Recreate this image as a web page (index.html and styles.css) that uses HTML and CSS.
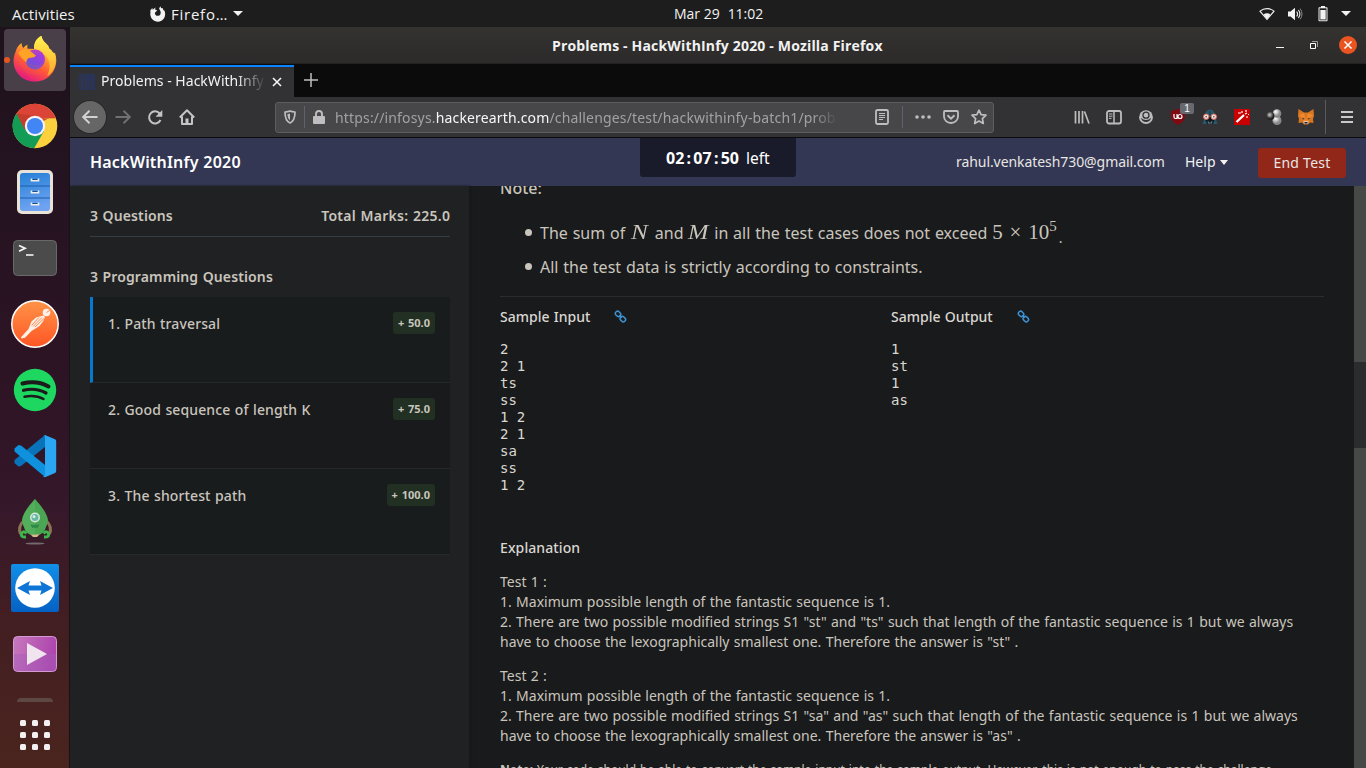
FILE: index.html
```html
<!DOCTYPE html>
<html lang="en">
<head>
<meta charset="utf-8">
<title>Problems - HackWithInfy 2020 - Mozilla Firefox</title>
<link rel="stylesheet" href="styles.css">
</head>
<body>
<header class="topbar">
  <div class="top-left">
    <span class="activities">Activities</span>
    <svg class="ff-mono" width="16" height="16" viewBox="0 0 16 16"><path d="M2.200 1.800l.5 2L5.500 1.600 5 3.600l2.300.9-1.500 1.200C4.600 6.300 4.600 8.200 5.800 9.200c1.800 1.400 4.800.3 4.900-2.300.1-1.900-1-2.900-1.600-4.100L10.200.2l1.100 2 1.300-.2.700 2 1.200.7c2 4.800-.8 11-6.500 11C2.500 15.700-.5 10.600.5 6.200L.3 4.100l1-.5z" fill="#f2f2f2"/></svg>
    <span class="app-name">Firefo…</span>
    <i class="caret"></i>
  </div>
  <div class="clock"><span>Mar 29</span><span>11:02</span></div>
  <div class="top-right">
    <svg width="16" height="14" viewBox="0 0 16 14"><path d="M1 4.200C5 .8 11 .8 15 4.200L8 12.500z" fill="none" stroke="#f2f2f2" stroke-width="1.100"/><path d="M4.500 7.400C6.500 5.800 9.500 5.800 11.500 7.400L8 12.400z" fill="#f2f2f2"/></svg>
    <svg class="volume" width="16" height="14" viewBox="0 0 16 14"><path d="M1 4.500h2.500L8 .8v12.400L3.500 9.500H1z" fill="#f2f2f2"/><path d="M9.700 4.500q1.800 2.500 0 5M11.400 3q3 4 0 8" fill="none" stroke="#eee" stroke-width="1.100"/><path d="M13.200 1.700q3.600 5.300 0 10.600" fill="none" stroke="#888" stroke-width="1"/></svg>
    <svg width="10" height="16" viewBox="0 0 10 16"><path d="M3 0h4v1.300h1.800q.7 0 .7.700v12.500q0 .7-.7.700H1.200q-.7 0-.7-.7V2q0-.7.700-.7H3z" fill="#f2f2f2"/><path d="M1.500 2.300h7v12h-7z" fill="#1d1d1d"/><path d="M2.300 4h5.400v9.500H2.300z" fill="#f2f2f2"/></svg>
    <i class="caret"></i>
  </div>
</header>
<div class="desktop">
  <nav class="dock">
    <div class="dock-item"><div class="active-app">
      <svg width="48" height="48" viewBox="0 0 48 48"><defs><linearGradient id="fa" x1=".8" y1="0" x2=".3" y2="1"><stop offset="0" stop-color="#fff44f"/><stop offset=".35" stop-color="#ffb52b"/><stop offset=".65" stop-color="#ff5a36"/><stop offset="1" stop-color="#e31587"/></linearGradient><linearGradient id="fb" x1=".8" y1="0" x2=".2" y2="1"><stop offset="0" stop-color="#b833e1"/><stop offset="1" stop-color="#5b57d6"/></linearGradient><linearGradient id="fc" x1="0" y1="0" x2="0" y2="1"><stop offset="0" stop-color="#fff44f"/><stop offset="1" stop-color="#ffa52d"/></linearGradient></defs><path d="M4.500 16Q6 10 10.500 7q.2 3.500 1.800 5Q14 9.600 16.500 8.500q-.5 2.500.2 4.200L23 13c0-6.500 2.500-11 7.500-13q.5 4 4.500 7.500 3 2.500 3.200 5 2.500 1 3.500 4 1.500 0 2.500 1c4 12-3.500 28-20 28C7 45.500-1.500 29.500 4.500 16z" fill="url(#fa)"/><path d="M23 13C23 6 26 2 30.500 0q.5 4 4.500 7.500 3 2.500 3.200 5 4.500 4 6 7.500c2 11-4 18-8 20Q45 20 23 13z" fill="url(#fc)"/><circle cx="24" cy="23.500" r="10" fill="url(#fb)"/><path d="M16.500 13Q23 11 29 14.500l3 3.500-5-.5q-3 1-4 2-3 4-7.500 3.500 2 5 7 6Q33 31 34 21q8 14-8 18Q8 40 8 19z" fill="#ff6334" opacity=".15"/><path d="M7 17q5-6 13-1.500l5 4.200q-2 2.700-7 2-3 2-2.500 5Q10 22 7 17z" fill="#ffa326"/></svg>
    </div></div>
    <div class="dock-item">
      <svg width="48" height="48" viewBox="0 0 48 48"><circle cx="24" cy="24" r="22.300" fill="#fdd03e"/><path d="M24 24L5.500 11.500A22.300 22.300 0 0 1 43.300 13z" fill="#db4437"/><path d="M5.300 11.800A22.300 22.300 0 0 0 23.200 46.300L33 29 24 24z" fill="#129c56"/><path d="M5.500 11.500L14 28 24 14z" fill="#c63c2d"/><path d="M24 13h19.300l1.500 3.200H24z" fill="#db4437"/><path d="M33 17h12q-4-1.500-13-1z" fill="#c9a02b" opacity=".5"/><circle cx="24" cy="24" r="10.200" fill="#f4f4f4"/><circle cx="24" cy="24" r="8" fill="#4285f4"/></svg>
    </div>
    <div class="dock-item">
      <svg width="48" height="48" viewBox="0 0 48 48"><defs><linearGradient id="fi" x1="0" y1="0" x2=".2" y2="1"><stop offset="0" stop-color="#2480d6"/><stop offset="1" stop-color="#6fa3f2"/></linearGradient></defs><rect x="6" y="2" width="36" height="44" rx="5" fill="#e8e2d8"/><rect x="9" y="5" width="30" height="38" rx="3" fill="url(#fi)"/><path d="M9 18h30M9 30h30" stroke="#1c5fab"/><g fill="#174f91"><rect x="20" y="11" width="8" height="1.500"/><rect x="20" y="23" width="8" height="1.500"/><rect x="20" y="35" width="8" height="1.500"/></g><path d="M20.500 10.500v2.300h7v-2.300M20.500 22.500v2.300h7v-2.300M20.500 34.500v2.300h7v-2.300" fill="none" stroke="#f1eee9" stroke-width="1.600"/></svg>
    </div>
    <div class="dock-item">
      <svg width="48" height="48" viewBox="0 0 48 48"><rect x="2.500" y="6.500" width="43" height="35" rx="4" fill="#4b4b4b" stroke="#696969"/><path d="M8 11.500l6 2.800-6 3" fill="none" stroke="#f4f4f4" stroke-width="1.800"/><path d="M15 21h7.500" stroke="#f4f4f4" stroke-width="1.600"/></svg>
    </div>
    <div class="dock-item">
      <svg width="48" height="48" viewBox="0 0 48 48"><defs><linearGradient id="po" x1="0" y1="0" x2="0" y2="1"><stop offset="0" stop-color="#ff9448"/><stop offset="1" stop-color="#ff5524"/></linearGradient></defs><circle cx="24" cy="24" r="23.200" fill="url(#po)" stroke="#fff" stroke-width="1.500"/><circle cx="35.500" cy="12.500" r="3.800" fill="#fff1e8"/><path d="M32.500 15.500L25 17.500l-4.500 4L17.500 29 10 37.300l.5 1.200 3.500-.8 6.500-6.700 8-5 3.500-4.500 2-4.500z" fill="#fff1e8"/><path d="M31 17.500l-9 9M28 17.500l-7.500 8M33 18.500l-9 8.500M35.500 12.500l3-2" fill="none" stroke="#ff7c39" stroke-width=".9"/></svg>
    </div>
    <div class="dock-item">
      <svg width="48" height="48" viewBox="0 0 48 48"><circle cx="24" cy="24" r="21.200" fill="#1ed760"/><path d="M11.500 17.500q14.500-3.500 26 3" stroke="#1b1b1b" stroke-width="4" fill="none" stroke-linecap="round"/><path d="M12.500 24.300q12.500-3 22.500 2.700" stroke="#1b1b1b" stroke-width="3.200" fill="none" stroke-linecap="round"/><path d="M13.500 30.700q11-2.300 19 2.300" stroke="#1b1b1b" stroke-width="2.500" fill="none" stroke-linecap="round"/></svg>
    </div>
    <div class="dock-item">
      <svg width="48" height="48" viewBox="0 0 48 48"><path d="M34 3v12L10 34l-2.500.5-4-3.500v-3z" fill="#0873b9"/><path d="M34 45V33L10 13.500 7.500 13l-4 3.500v3z" fill="#1091de"/><path d="M34 3l10 4.300q1.200.6 1.200 2V39q0 1.500-1.200 2L34 45.200q-1 0-2-1 2 .5 2-1.500V5.500Q34 3 32.500 4z" fill="#2aa6f2"/></svg>
    </div>
    <div class="dock-item">
      <svg width="48" height="48" viewBox="0 0 48 48"><path d="M12.500 23q-6 6-3 13M35.500 23q6 6 3 13" fill="none" stroke="#8b7355" stroke-width="3"/><path d="M19 36h10l-3 3h-4z" fill="#d7b98a"/><path d="M24 1Q36 14 37 22q-2 12-8 14.500H19Q13 34 11 22 12 14 24 1z" fill="#4ba654"/><path d="M24 1Q12 14 11 22q2 12 8 14.500h5z" fill="#5ab55f" opacity=".5"/><circle cx="24" cy="19.500" r="5" fill="#d3e6dd"/><circle cx="24" cy="19.500" r="3.500" fill="#69b9a1"/><circle cx="23" cy="18.700" r="1.400" fill="#d9f3ec"/><path d="M20 27.500h8M21 29h6" stroke="#247c40" stroke-width="1.500" stroke-dasharray="1.500 .6"/><path d="M15.500 35.500q-3-3.500-5 0-1 4 4.500 3.500M32.500 35.500q3-3.500 5 0 1 4-4.500 3.500" fill="none" stroke="#3eb44d" stroke-width="3"/><ellipse cx="24" cy="45.500" rx="9.500" ry="1.100" fill="#756a70"/></svg>
    </div>
    <div class="dock-item">
      <svg width="48" height="48" viewBox="0 0 48 48"><defs><linearGradient id="tv" x1="0" y1="0" x2="0" y2="1"><stop offset="0" stop-color="#118fe8"/><stop offset="1" stop-color="#0561c4"/></linearGradient></defs><rect width="48" height="48" rx="2" fill="url(#tv)"/><circle cx="24" cy="24" r="19.800" fill="#fff"/><path d="M6 24l13-7-1.500 4.500h13L29 17l13 7-13 7 1.500-4.500h-13L19 31z" fill="#0c75d5"/></svg>
    </div>
    <div class="dock-item">
      <svg width="48" height="48" viewBox="0 0 48 48"><defs><linearGradient id="vi" x1="0" y1="0" x2="1" y2=".2"><stop offset="0" stop-color="#c879bd"/><stop offset="1" stop-color="#ad45ad"/></linearGradient></defs><rect x="2.500" y="6.500" width="43" height="35" rx="4" fill="url(#vi)" stroke="#d29bd0"/><path d="M3 24h42v14q0 3-3 3H6q-3 0-3-3z" fill="#a35cba" opacity=".4"/><path d="M16 13l20 11-20 11z" fill="#f0e4ef"/></svg>
    </div>
    <div class="dock-peek"></div>
    <svg class="app-grid" width="30" height="30" viewBox="0 0 30 30" fill="#f2f0f0"><rect width="6" height="6" rx="1.500"/><rect x="12" width="6" height="6" rx="1.500"/><rect x="24" width="6" height="6" rx="1.500"/><rect y="12" width="6" height="6" rx="1.500"/><rect x="12" y="12" width="6" height="6" rx="1.500"/><rect x="24" y="12" width="6" height="6" rx="1.500"/><rect y="24" width="6" height="6" rx="1.500"/><rect x="12" y="24" width="6" height="6" rx="1.500"/><rect x="24" y="24" width="6" height="6" rx="1.500"/></svg>
  </nav>
  <div class="window">
    <div class="titlebar">
      <span class="window-title">Problems - HackWithInfy 2020 - Mozilla Firefox</span>
      <svg class="window-controls" width="80" height="20" viewBox="0 0 80 20"><path d="M7 12.500h8" stroke="#f2f2f2"/><path d="M41.500 8.500h5v5h-5z" fill="none" stroke="#fff"/><path d="M43 6.500h5.500V12" fill="none" stroke="#999"/><circle cx="79" cy="10" r="9" fill="#e95420"/><path d="M75.500 6.500l7 7M82.500 6.500l-7 7" stroke="#fff" stroke-width="1.500"/></svg>
    </div>
    <div class="tabs">
      <div class="tab">
        <svg width="16" height="16" viewBox="0 0 16 16"><rect width="16" height="16" rx="1" fill="#2a3358"/><path d="M2.500 1v14M6.500 2v13M6.500 8q4.500-1.500 4.500 2v5" fill="none" stroke="#343643" stroke-width="1.500"/></svg>
        <span class="tab-title">Problems - HackWithInfy</span>
        <svg class="tab-close" width="10" height="10" viewBox="0 0 10 10"><path d="M1 1l8 8M9 1L1 9" stroke="#f4f4f4" stroke-width="1.600"/></svg>
      </div>
      <svg class="new-tab" width="14" height="14" viewBox="0 0 14 14"><path d="M7 0v14M0 7h14" stroke="#c0c0c0" stroke-width="1.500"/></svg>
    </div>
    <div class="toolbar">
      <div class="back"><svg width="16" height="16" viewBox="0 0 16 16"><path d="M15.500 8H1.500M7.500 1.800L1.200 8l6.300 6.200" fill="none" stroke="#d2d2d2" stroke-width="2"/></svg></div>
      <div class="nav-icons">
        <svg width="16" height="16" viewBox="0 0 16 16"><path d="M.5 8h14M8.500 1.800L14.800 8l-6.300 6.200" fill="none" stroke="#707072" stroke-width="1.900"/></svg>
        <svg width="16" height="16" viewBox="0 0 16 16"><path d="M12.700 4.500A6 6 0 1 0 13.500 11" fill="none" stroke="#c4c4c4" stroke-width="2"/><path d="M15.300 1v6.800H8.500z" fill="#c4c4c4"/></svg>
        <svg width="16" height="16" viewBox="0 0 16 16"><path d="M.8 8.500L8 1.300l7.200 7.200M3 7.500V15h10V7.500" fill="none" stroke="#c4c4c4" stroke-width="2" stroke-linejoin="round"/><path d="M6.500 9.500h3V15h-3z" fill="#c4c4c4"/></svg>
      </div>
      <div class="urlbar">
        <svg class="shield" width="12" height="14" viewBox="0 0 12 14"><path d="M6 1C4.500 1.700 3 1.900 1 2c0 5 .5 9 5 11 4.500-2 5-6 5-11-2-.1-3.500-.3-5-1z" fill="none" stroke="#bebebf" stroke-width="1.700" stroke-linejoin="round"/><path d="M6 3.500v7Q3.500 8.500 3.300 4.200z" fill="#bebebf"/></svg>
        <i class="url-rule"></i>
        <svg class="lock" width="12" height="14" viewBox="0 0 12 14"><rect y="6" width="12" height="8" rx="1" fill="#bebebf"/><path d="M3 7V4q0-3 3-3t3 3v3" fill="none" stroke="#bebebf" stroke-width="1.900"/></svg>
        <span class="url">https://infosys.<b>hackerearth.com</b>/challenges/test/hackwithinfy-batch1/probl</span>
        <svg class="reader" width="14" height="16" viewBox="0 0 14 16"><rect x="1" y="1" width="12" height="14" rx="1.500" fill="none" stroke="#bebebf" stroke-width="1.800"/><path d="M4 4.500h6M4 6.500h6M4 8.500h6M4 10.500h4" stroke="#bebebf"/></svg>
        <i class="url-rule late"></i>
        <svg class="dots" width="16" height="4" viewBox="0 0 16 4" fill="#bebebf"><circle cx="2" cy="2" r="1.800"/><circle cx="8" cy="2" r="1.800"/><circle cx="14" cy="2" r="1.800"/></svg>
        <svg class="pocket" width="16" height="14" viewBox="0 0 16 14"><path d="M2 1h12q1 0 1 1v4.500a7 6.500 0 0 1-14 0V2q0-1 1-1z" fill="none" stroke="#bebebf" stroke-width="1.800"/><path d="M4.500 5.200L8 8.600l3.500-3.400" fill="none" stroke="#bebebf" stroke-width="1.900"/></svg>
        <svg width="16" height="16" viewBox="0 0 16 16"><path d="M8 1.200l2.100 4.400 4.900.6-3.600 3.400.9 4.900L8 12.100l-4.300 2.400.9-4.900L1 6.200l4.900-.6z" fill="none" stroke="#bebebf" stroke-width="1.700" stroke-linejoin="round"/></svg>
      </div>
      <div class="extensions">
        <svg width="16" height="16" viewBox="0 0 16 16"><path d="M1.500 2v12.500M5 2v12.500M8.500 2v12.500M10.500 2.500l4.500 12" stroke="#bdbdbe" stroke-width="1.700"/></svg>
        <svg width="16" height="16" viewBox="0 0 16 16"><rect x="1" y="2" width="14" height="12.500" rx="2" fill="none" stroke="#bdbdbe" stroke-width="1.800"/><path d="M8 2v12" stroke="#bdbdbe" stroke-width="1.500"/><path d="M3 5h3.500M3 7.200h3.500M3 9.400h2.500" stroke="#bdbdbe"/></svg>
        <svg width="16" height="16" viewBox="0 0 16 16"><circle cx="8" cy="8.200" r="6.900" fill="#bdbdbe"/><path d="M3 8.700q2 2.300 5 2.300t5-2.300q-1 4.300-5 4.300t-5-4.300z" fill="#323234"/><circle cx="8" cy="6.200" r="3" fill="#bdbdbe" stroke="#323234" stroke-width="1.300"/></svg>
        <span class="ublock"><svg width="16" height="16" viewBox="0 0 16 16"><path d="M8 0l7 2v5q0 6-7 9Q1 13 1 7V2z" fill="#810912"/><path d="M4 5v3q0 1.500 1.500 1.500H7V5M8 7.500a2 2 0 1 0 4 0 2 2 0 1 0-4 0" fill="none" stroke="#fff" stroke-width="1.200"/></svg><span class="badge">1</span></span>
        <svg width="16" height="16" viewBox="0 0 16 16"><path d="M8 .5Q3 1 3 7L.5 15h15L13 7Q13 1 8 .5z" fill="#285769"/><path d="M3 10l4-2h2l4 2-2 5H5z" fill="#111c22"/><path d="M8 2v4" stroke="#163947"/><g fill="#f4ddd8" stroke="#dc6b56"><circle cx="4.200" cy="7.700" r="2.700"/><circle cx="11.800" cy="7.700" r="2.700"/></g><circle cx="4.200" cy="7.700" r=".8" fill="#444"/><circle cx="11.800" cy="7.700" r=".8" fill="#444"/><path d="M5.500 13h1.500v2M10.500 13H9v2" stroke="#8ba3ab" fill="none" stroke-width=".8"/></svg>
        <svg width="16" height="16" viewBox="0 0 16 16"><path d="M0 0h16v16H0z" fill="#c80000"/><path d="M2.500 13L10 6" stroke="#fff" stroke-width="2.300"/><path d="M8 2v2M13 4l-2 1M12 8h2M4 4h3M12 1v2M14 5.500h1" stroke="#fff" stroke-width="1.200"/></svg>
        <svg width="16" height="16" viewBox="0 0 16 16"><defs><radialGradient id="ball" cx=".35" cy=".3"><stop stop-color="#fff"/><stop offset="1" stop-color="#888"/></radialGradient><radialGradient id="dball" cx=".4" cy=".35"><stop stop-color="#ccc"/><stop offset="1" stop-color="#222"/></radialGradient></defs><circle cx="11" cy="11.500" r="4.500" fill="url(#ball)"/><circle cx="11" cy="4.500" r="4.300" fill="url(#ball)"/><circle cx="4.500" cy="7" r="3.900" fill="url(#dball)"/></svg>
        <svg width="16" height="16" viewBox="0 0 16 16"><path d="M.5 0L6 3.500h4L15.500 0 16 7l-1 3 .5 4-3.500-.5L10 15.500H6L4 13.500.5 14 1 10 0 7z" fill="#d9761f"/><path d="M1 6l5-2 2 8 2-8 5 2-3 3-2 4H6L4 9z" fill="#ed8a30"/><path d="M4 8.500l3 1.500-2 .5zM12 8.500L9 10l2 .5z" fill="#3b2a25"/><path d="M5.500 12h5l-.5 3H6z" fill="#d8c4b7"/><path d="M6.500 13h3v1.500h-3z" fill="#282220"/></svg>
      </div>
      <i class="menu-rule"></i>
      <svg class="menu" width="12" height="12" viewBox="0 0 12 12"><path d="M0 1h12M0 6h12M0 11h12" stroke="#c9c9c9" stroke-width="1.900"/></svg>
    </div>
    <div class="site-header">
      <span class="brand">HackWithInfy 2020</span>
      <div class="timer"><b>02</b><b class="colon">:</b><b>07</b><b class="colon">:</b><b>50</b><span class="left">left</span></div>
      <span class="email">rahul.venkatesh730@gmail.com</span>
      <span class="help">Help</span><i class="caret help-caret"></i>
      <button class="end-test">End Test</button>
    </div>
    <div class="page">
      <aside class="sidebar">
        <div class="summary"><span class="q-count">3 Questions</span><span class="marks">Total Marks: 225.0</span></div>
        <h3 class="section-title">3 Programming Questions</h3>
        <div class="questions">
          <div class="question current"><span>1. Path traversal</span><b class="score">+ 50.0</b></div>
          <div class="question even"><span>2. Good sequence of length K</span><b class="score">+ 75.0</b></div>
          <div class="question"><span>3. The shortest path</span><b class="score">+ 100.0</b></div>
        </div>
      </aside>
      <main class="problem">
        <p class="note-title">Note:</p>
        <ul class="notes">
          <li><span>The sum of <i class="math var-n">N</i> and <i class="math var-m">M</i> in all the test cases does not exceed <span class="math">5 × 10<sup>5</sup></span><small class="dot">.</small></span></li>
          <li><span>All the test data is strictly according to constraints.</span></li>
        </ul>
        <div class="samples">
          <section>
            <h4><span>Sample Input</span><svg class="link" width="13" height="13" viewBox="0 0 13 13"><g fill="none" stroke="#3c92d2" stroke-width="1.500"><rect x="1.200" y="1.700" width="5.600" height="4.400" rx="2" transform="rotate(45 4 4)"/><rect x="6.200" y="7" width="5.600" height="4.400" rx="2" transform="rotate(45 9 9)"/><path d="M5.200 5.200l2.600 2.600"/></g></svg></h4>
            <pre>2
2 1
ts
ss
1 2
2 1
sa
ss
1 2</pre>
          </section>
          <section>
            <h4><span>Sample Output</span><svg class="link" width="13" height="13" viewBox="0 0 13 13"><g fill="none" stroke="#3c92d2" stroke-width="1.500"><rect x="1.200" y="1.700" width="5.600" height="4.400" rx="2" transform="rotate(45 4 4)"/><rect x="6.200" y="7" width="5.600" height="4.400" rx="2" transform="rotate(45 9 9)"/><path d="M5.200 5.200l2.600 2.600"/></g></svg></h4>
            <pre>1
st
1
as</pre>
          </section>
        </div>
        <h4 class="explain-title">Explanation</h4>
        <p class="explain">Test 1 :<br>1. Maximum possible length of the fantastic sequence is 1.<br>2. There are two possible modified strings S1 "st" and "ts" such that length of the fantastic sequence is 1 but we always<br>have to choose the lexographically smallest one. Therefore the answer is "st" .</p>
        <p class="explain">Test 2 :<br>1. Maximum possible length of the fantastic sequence is 1.<br>2. There are two possible modified strings S1 "sa" and "as" such that length of the fantastic sequence is 1 but we always<br>have to choose the lexographically smallest one. Therefore the answer is "as" .</p>
        <p class="footnote"><b>Note:</b> Your code should be able to convert the sample input into the sample output. However, this is not enough to pass the challenge,</p>
      </main>
      <div class="scrollbar"><div class="thumb"></div></div>
    </div>
  </div>
</div>
</body>
</html>
```
FILE: styles.css
```css
* { box-sizing: border-box; }
html, body { margin: 0; width: 1366px; height: 768px; overflow: hidden; background: #191a1c; }
body { display: flex; flex-direction: column; font-family: "Noto Sans", "Open Sans", sans-serif; font-size: 14px; color: #f2f2f2; white-space: nowrap; }
svg { display: block; flex: none; }
.caret { border: 5px solid transparent; border-top-color: #f2f2f2; border-bottom: 0; flex: none; }

.topbar { height: 27px; flex: none; background: #1d1d1d; display: grid; grid-template-columns: 662px auto 1fr; align-items: center; padding: 0 15px 0 12px; font-family: "Open Sans", sans-serif; }
.top-left { display: flex; align-items: center; font-size: 15px; }
.activities { width: 138px; letter-spacing: .1px; }
.app-name { margin: 0 5px 0 5px; width: 57px; letter-spacing: .75px; }
.clock { display: flex; gap: 8px; letter-spacing: -.02px; }
.top-right { display: flex; align-items: center; justify-content: flex-end; gap: 13px; }
.volume { margin: 0 2px 0 -1px; }

.desktop { display: flex; height: 741px; }
.dock { width: 70px; flex: none; display: flex; flex-direction: column; align-items: center; background: linear-gradient(#1e121b 0, #241321 20%, #2e1424 50%, #35182a 65%, #431e22 80%, #4a251e); border-right: 1px solid #19131a; }
.dock-item { height: 66px; flex: none; display: grid; place-items: center; }
.active-app { width: 62px; height: 62px; border-radius: 4px; background: #493f49; display: grid; place-items: center; position: relative; }
.active-app::before { content: ""; position: absolute; left: 0; top: 28px; width: 6px; height: 6px; border-radius: 50%; background: #e95420; }
.dock-peek { width: 36px; height: 4px; margin-top: 11px; border-radius: 6px 6px 0 0; background: #5d4742; }
.app-grid { margin-top: 18px; }

.window { flex: 1; min-width: 0; display: flex; flex-direction: column; }
.titlebar { height: 37px; background: linear-gradient(#343330, #2c2a2a); border-bottom: 1px solid #222; display: flex; align-items: center; }
.window-title { font-weight: 700; font-size: 14px; margin-left: 482px; width: 331px; letter-spacing: .17px; font-family: "Open Sans", sans-serif; }
.window-controls { margin-left: 386px; overflow: visible; }
.tabs { height: 33px; background: #0b0b0b; display: flex; align-items: center; }
.tab { width: 224px; height: 32px; border-top: 2px solid #0a84ff; background: #323234; display: flex; align-items: center; padding-left: 9px; align-self: flex-end; }
.tab-title { width: 165px; margin: -4px 0 0 6px; overflow: hidden; letter-spacing: .02px; -webkit-mask-image: linear-gradient(90deg, #000 82%, transparent); mask-image: linear-gradient(90deg, #000 82%, transparent); }
.tab-close { margin-left: 6px; }
.new-tab { margin: -2px 0 0 10px; }
.toolbar { height: 41px; background: #323234; border-bottom: 1px solid #0c0c0d; display: flex; align-items: center; padding-left: 4px; }
.back { width: 32px; height: 32px; border-radius: 50%; background: #666667; display: grid; place-items: center; box-shadow: 0 0 0 1px #28282a; }
.nav-icons { display: flex; gap: 16px; margin-left: 9px; }
.urlbar { width: 719px; height: 31px; margin-left: 80px; background: #474749; border: 1px solid #5d5d5f; border-radius: 3px; display: flex; align-items: center; padding-left: 8px; }
.url-rule { width: 1px; height: 22px; background: #5c6270; margin: 0 8px; }
.url-rule.late { margin: 0 11px 0 13px; }
.url { width: 503px; margin: 0 37px 0 10px; overflow: hidden; color: #a2a2a3; letter-spacing: .16px; -webkit-mask-image: linear-gradient(90deg, #000 95%, transparent); mask-image: linear-gradient(90deg, #000 95%, transparent); }
.url b { font-weight: 400; color: #f7f7f8; }
.dots { margin-left: 1px; }
.pocket { margin: 0 12px; }
.extensions { display: flex; gap: 16px; margin-left: 80px; }
.ublock { position: relative; }
.badge { position: absolute; left: 10px; top: -6px; width: 14px; height: 11px; border-radius: 2px; background: #666a70; font: 10px/11px "Liberation Sans", sans-serif; text-align: center; color: #fff; }
.menu-rule { width: 1px; height: 34px; background: #5b5b5d; margin: 0 15px 0 11px; }

.site-header { height: 48px; background: #333753; display: flex; align-items: center; padding-left: 20px; }
.brand { font-size: 16px; font-weight: 600; width: 550px; color: #fff; letter-spacing: .2px; word-spacing: .4px; }
.timer { width: 156px; height: 39px; align-self: flex-start; background: #1a1b2a; border-radius: 0 0 3px 3px; display: flex; align-items: center; padding: 1px 0 0 26px; font-size: 16px; color: #fff; }
.timer .colon { width: 9px; text-align: center; }
.left { margin-left: 7px; font-size: 15.5px; }
.email { width: 209px; margin: -2px 0 0 160px; color: #e8e6e3; letter-spacing: -.07px; }
.help { margin: -2px 0 0 20px; width: 31px; }
.help-caret { margin-left: 4px; border-width: 5px 4px 0; }
.end-test { width: 88px; height: 30px; margin: 2px 0 0 30px; padding: 0; border: 0; border-radius: 3px; background: #902719; color: #e8e6e3; font: 14px/30px "Noto Sans", sans-serif; letter-spacing: .25px; flex: none; }

.page { flex: 1; min-height: 0; display: flex; color: #c9c5bd; word-spacing: .68px; }
.sidebar { width: 399px; background: #202123; padding: 10px 19px 0 20px; box-shadow: 1px 0 2px #17181a; flex: none; letter-spacing: .12px; }
.summary { height: 41px; display: flex; align-items: center; justify-content: space-between; border-bottom: 1px solid #353e43; font-weight: 600; padding-bottom: 2px; }
.marks { letter-spacing: .27px; margin-right: -.27px; }
.section-title { height: 20px; line-height: 20px; margin: 30px 0 10px; font-size: 14px; font-weight: 600; }
.question { height: 86px; display: flex; justify-content: space-between; align-items: flex-start; padding: 15px 15px 0 18px; background: #191c1d; border-bottom: 1px solid #26292b; font-weight: 500; line-height: 24px; }
.question.current { border-left: 3px solid #0679ce; padding-left: 15px; }
.question.even { background: #191a1c; }
.score { height: 22px; border-radius: 3px; background: #213022; padding: 0 5px; font-size: 11px; line-height: 22px; letter-spacing: 0; word-spacing: 1px; }

.problem { flex: 1; min-width: 0; padding: 0 30px 0 31px; overflow: hidden; }
.note-title { height: 24px; line-height: 24px; margin: -10px 0 22px; font-size: 16px; font-weight: 500; }
.notes { margin: 0 0 12px; padding: 0; list-style: none; font-size: 16px; }
.notes li { height: 34px; line-height: 34px; display: flex; align-items: center; padding-left: 25px; }
.notes li::before { content: ""; width: 7px; height: 7px; border-radius: 50%; background: #c9c5bd; margin: -2px 8px 0 0; }
.notes li:first-child { margin-top: -6px; }
.math { font-family: "Liberation Serif", serif; font-size: 21px; line-height: 20px; word-spacing: 1.6px; }
.var-n, .var-m { display: inline-block; transform-origin: left center; }
.var-n { width: 19px; margin-left: 1px; transform: scaleX(1.2); }
.var-m { width: 21px; transform: scaleX(1.17); }
.math sup { font-size: 15px; line-height: 0; }
.dot { font-size: 14px; position: relative; top: 4px; left: 2px; }
.samples { display: grid; grid-template-columns: 391px 1fr; height: 241px; border-top: 1px solid #292b2d; }
.samples h4 { display: flex; align-items: center; gap: 24px; height: 20px; margin: 9px 0 15px; font-size: 14px; font-weight: 500; color: #dad7d1; }
pre { margin: 0; font: 14px/17px "DejaVu Sans Mono", monospace; color: #dad7d1; word-spacing: 0; }
.explain-title { height: 20px; line-height: 20px; margin: 1px 0 14px; font-size: 14px; font-weight: 500; color: #dad7d1; letter-spacing: .1px; }
.explain { margin: 0 0 14px; line-height: 20px; }
.footnote { margin: 0; font-size: 12px; line-height: 20px; word-spacing: .8px; }
.scrollbar { width: 12px; flex: none; background: #474947; padding-top: 176px; }
.thumb { height: 86px; background: #2b2c2d; }
```
